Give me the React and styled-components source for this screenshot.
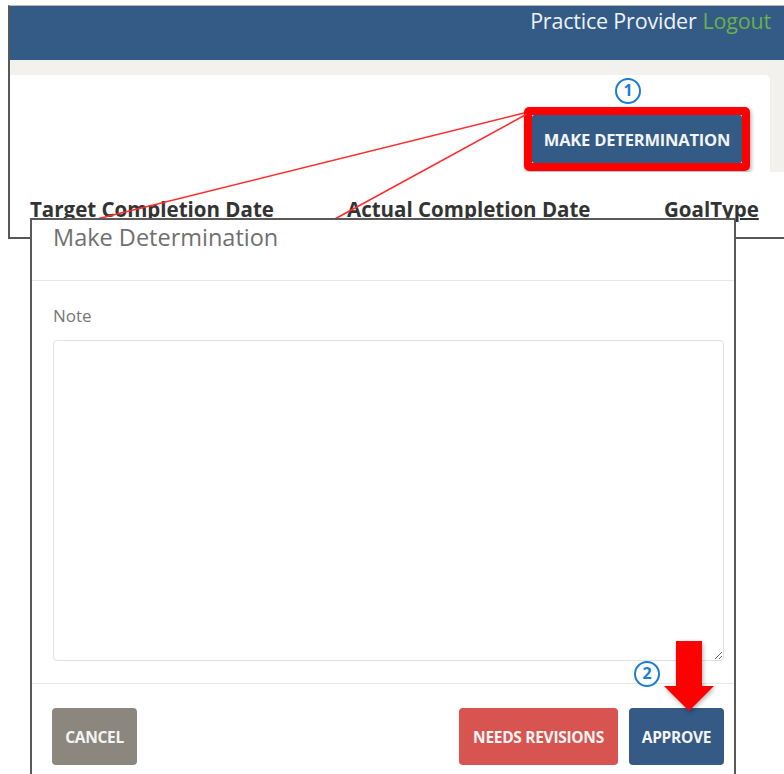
import React from "react";
import styled, { createGlobalStyle } from "styled-components";

const GlobalStyle = createGlobalStyle`
  html, body {
    margin: 0;
    padding: 0;
    background: #ffffff;
  }
  body {
    font-family: "Open Sans", "Noto Sans", sans-serif;
  }
`;

const Page = styled.div`
  position: relative;
  width: 784px;
  height: 774px;
  overflow: hidden;
  background: #ffffff;
`;

// Background application window
const Window = styled.div`
  margin: 5px 0 0 8px;
  border-top: 1px solid #b9b9b9;
  border-left: 2px solid #585858;
  border-bottom: 2px solid #585858;
  display: flex;
  flex-direction: column;
`;

const TopBar = styled.div`
  height: 54px;
  background: #335b86;
  display: flex;
  justify-content: flex-end;
  align-items: flex-start;
  padding: 0 13px 0 0;
  box-sizing: border-box;
  font-size: 21.5px;
  letter-spacing: -0.2px;
  color: #eef2f6;
  gap: 6px;
`;

const LogoutLink = styled.a`
  color: #6ab04c;
  text-decoration: none;
`;

const Band = styled.div`
  background: #f3f1ed;
  padding: 15px 14px 0 0;
`;

const Card = styled.div`
  height: 97px;
  background: #ffffff;
  border-radius: 0 5px 0 0;
  display: flex;
  flex-direction: column;
  align-items: flex-end;
  padding: 3px 20px 0 0;
  box-sizing: border-box;
  gap: 3px;
`;

const StepBadge = styled.div`
  width: 26px;
  height: 26px;
  box-sizing: border-box;
  border: 2.5px solid #1b7ed3;
  border-radius: 50%;
  background: #ffffff;
  color: #1b7ed3;
  font-weight: 700;
  font-size: 16px;
  line-height: 21px;
  text-align: center;
  margin-right: ${({ $offset }) => $offset || 0}px;
`;

const Highlight = styled.div`
  border: 8px solid #ff0000;
  border-radius: 5px;
  box-shadow: 1px 2px 4px rgba(0, 0, 0, 0.35);
`;

const PrimaryButton = styled.button`
  width: 210px;
  height: 48px;
  border: none;
  border-radius: 2px;
  background: #335b86;
  color: #f2f4f7;
  font-family: "Open Sans", sans-serif;
  font-weight: 700;
  font-size: 16.5px;
  letter-spacing: -0.2px;
  padding: 0;
`;

const HeaderRow = styled.div`
  height: 65px;
  background: #ffffff;
  display: grid;
  grid-template-columns: 317px 317px auto;
  padding: 24px 0 0 20px;
  box-sizing: border-box;
  overflow: hidden;
`;

const ColumnHead = styled.div`
  font-weight: 700;
  font-size: 20.5px;
  line-height: 26px;
  color: #333333;
  text-decoration: underline;
  text-underline-offset: 1px;
  white-space: nowrap;
`;

// Connector lines from the button to the dialog
const Connectors = styled.svg`
  position: absolute;
  inset: 0;
  z-index: 1;
  pointer-events: none;
`;

const Dialog = styled.div`
  position: absolute;
  left: 30px;
  top: 218px;
  width: 706px;
  bottom: 0;
  z-index: 2;
  background: #ffffff;
  border: 2px solid #5a5a5a;
  border-bottom: none;
  box-sizing: border-box;
  display: flex;
  flex-direction: column;
`;

const DialogTitle = styled.div`
  height: 61px;
  padding: 1px 0 0 21px;
  box-sizing: border-box;
  border-bottom: 1px solid #e6e6e6;
  font-size: 23.5px;
  line-height: 32px;
  color: #707070;
`;

const DialogBody = styled.div`
  padding: 23px 10px 22px 21px;
  border-bottom: 1px solid #e6e6e6;
  display: flex;
  flex-direction: column;
`;

const FieldLabel = styled.label`
  font-size: 17px;
  line-height: 23px;
  color: #777777;
  margin-bottom: 13px;
`;

const NoteInput = styled.textarea`
  height: 321px;
  box-sizing: border-box;
  border: 1px solid #dde2e8;
  border-radius: 4px;
  outline: none;
  resize: vertical;
  font-family: "Open Sans", sans-serif;
`;

const DialogFooter = styled.div`
  padding: 24px 10px 0 20px;
  display: flex;
  align-items: flex-start;
  gap: 11px;
`;

const ActionButton = styled.button`
  height: 57px;
  width: ${({ $width }) => $width}px;
  border: none;
  border-radius: 4px;
  background: ${({ $bg }) => $bg};
  color: #f4f4f4;
  font-family: "Open Sans", sans-serif;
  font-weight: 700;
  font-size: 15.5px;
  letter-spacing: -0.3px;
  padding: 0;
  margin-right: ${({ $push }) => ($push ? "auto" : "0")};
`;

const ApproveWrap = styled.div`
  position: relative;
`;

const Callout = styled.div`
  position: absolute;
  left: 5px;
  top: -47px;
`;

const PointerArrow = styled.svg`
  position: absolute;
  left: 35px;
  top: -67px;
  filter: drop-shadow(1px 2px 2px rgba(0, 0, 0, 0.3));
`;

export default function App() {
  return (
    <>
      <GlobalStyle />
      <Page>
        <Window>
          <TopBar>
            <span>Practice Provider</span>
            <LogoutLink>Logout</LogoutLink>
          </TopBar>
          <Band>
            <Card>
              <StepBadge $offset={109}>1</StepBadge>
              <Highlight>
                <PrimaryButton>MAKE DETERMINATION</PrimaryButton>
              </Highlight>
            </Card>
          </Band>
          <HeaderRow>
            <ColumnHead>Target Completion Date</ColumnHead>
            <ColumnHead>Actual Completion Date</ColumnHead>
            <ColumnHead>GoalType</ColumnHead>
          </HeaderRow>
        </Window>

        <Connectors width="784" height="774">
          <line x1="524" y1="113" x2="93" y2="220" stroke="#ff2a2a" strokeWidth="1.5" />
          <line x1="527" y1="114" x2="333" y2="220" stroke="#ff2a2a" strokeWidth="1.5" />
        </Connectors>

        <Dialog>
          <DialogTitle>Make Determination</DialogTitle>
          <DialogBody>
            <FieldLabel>Note</FieldLabel>
            <NoteInput />
          </DialogBody>
          <DialogFooter>
            <ActionButton $width={85} $bg="#8b877e" $push>
              CANCEL
            </ActionButton>
            <ActionButton $width={159} $bg="#d75451">
              NEEDS REVISIONS
            </ActionButton>
            <ApproveWrap>
              <ActionButton $width={95} $bg="#345a85">
                APPROVE
              </ActionButton>
              <Callout>
                <StepBadge>2</StepBadge>
              </Callout>
              <PointerArrow width="52" height="72" viewBox="0 0 52 72">
                <polygon
                  points="12,0 38,0 38,45 50,45 25,70 0,45 12,45"
                  fill="#ff0000"
                />
              </PointerArrow>
            </ApproveWrap>
          </DialogFooter>
        </Dialog>
      </Page>
    </>
  );
}
